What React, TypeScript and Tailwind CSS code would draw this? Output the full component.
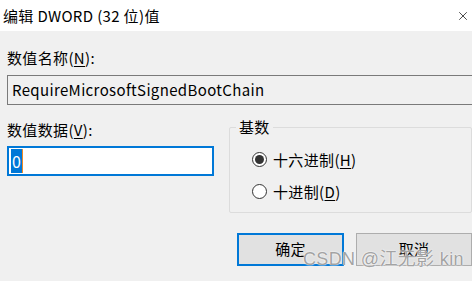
import { X } from "lucide-react";

const FONT = { fontFamily: '"Segoe UI", "Noto Sans CJK SC", "Noto Sans", sans-serif' };

function Radio({ checked, label, hotkey }: { checked: boolean; label: string; hotkey: string }) {
  return (
    <div className="flex items-center gap-[6px]">
      <span className="w-[15px] h-[15px] rounded-full border border-[#333] bg-white flex items-center justify-center">
        {checked && <span className="w-[9px] h-[9px] rounded-full bg-[#333]" />}
      </span>
      <span className="text-[15px] leading-none text-black">
        {label}(<span className="underline underline-offset-2">{hotkey}</span>)
      </span>
    </div>
  );
}

export default function App() {
  return (
    <div className="relative w-[472px] h-[281px] overflow-hidden bg-[#f0f0f0] text-black tracking-[0.35px]" style={FONT}>
      <div className="h-[31px] bg-white flex items-center justify-between pl-[3px] pr-[2px]">
        <span className="text-[15px] leading-none">编辑 DWORD (32 位)值</span>
        <X className="w-[14px] h-[14px] text-black" strokeWidth={1.2} />
      </div>

      <div className="pl-[7px]">
        <div className="mt-[19px] text-[15px] leading-none">
          数值名称(<span className="underline underline-offset-2">N</span>):
        </div>
        <div className="mt-[10px] h-[30px] w-[480px] border border-[#7a7a7a] bg-[#f0f0f0] flex items-center pl-[4px] text-[15px]">
          RequireMicrosoftSignedBootChain
        </div>

        <div className="flex mt-[14px]">
          <div className="w-[222px]">
            <div className="mt-[3px] text-[15px] leading-none">
              数值数据(<span className="underline underline-offset-2">V</span>):
            </div>
            <div className="mt-[9px] w-[207px] h-[30px] border-2 border-[#0078d7] bg-white flex items-center pl-[2px]">
              <span className="bg-[#0078d7] text-white text-[16px] leading-[24px] px-[1px]">0</span>
              <span className="w-[1px] h-[24px] bg-[#f08a24]" />
            </div>
          </div>

          <div className="relative flex-1 mt-[8px] h-[86px] border border-[#dcdcdc] rounded-[2px]">
            <span className="absolute -top-[9px] left-[6px] px-[3px] bg-[#f0f0f0] text-[15px] leading-none">基数</span>
            <div className="flex flex-col gap-[17px] pl-[22px] pt-[24px]">
              <Radio checked label="十六进制" hotkey="H" />
              <Radio checked={false} label="十进制" hotkey="D" />
            </div>
          </div>
        </div>

        <div className="flex mt-[20px] pl-[230px] gap-[12px]">
          <button className="w-[111px] h-[33px] border-2 border-[#0078d7] bg-[#e1e1e1] text-[15px]">确定</button>
          <button className="w-[120px] h-[33px] border border-[#adadad] bg-[#e1e1e1] text-[15px]">取消</button>
        </div>
      </div>

      <div
        className="absolute left-[303px] top-[250px] whitespace-nowrap text-[18px] leading-none text-[#a3a3a3] pointer-events-none"
        style={{ fontFamily: '"Liberation Sans", "Noto Sans CJK SC", sans-serif', textShadow: "0 0 2px #fff, 0 0 1px #fff" }}
      >
        CSDN @江无影 kin
      </div>
    </div>
  );
}
